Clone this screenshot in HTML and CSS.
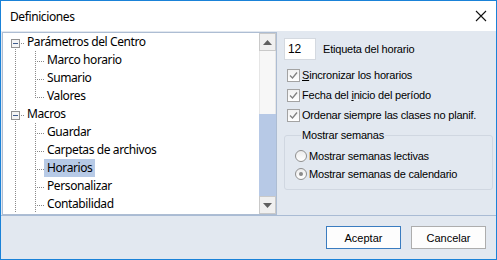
FILE: index.html
```html
<!DOCTYPE html>
<html lang="es">
  <head>
    <meta charset="UTF-8" />
    <title>Definiciones</title>
    <link rel="stylesheet" href="styles.css">
  </head>
  <body>
    <div class="window">
      <div class="titlebar">
        <span class="title">Definiciones</span>
        <svg class="close" width="12" height="12" viewBox="0 0 12 12">
          <path d="M1 1L11 11M11 1L1 11" />
        </svg>
      </div>

      <div class="main">
        <div class="tree">
          <div class="tree-list">
            <div class="row">
              <svg class="guide" width="19" height="18">
                <path class="dot" d="M10.5 16V18M16 10.5H19" />
                <rect class="box" x="6.5" y="6.5" width="8" height="8" />
                <path class="minus" d="M8 10.5h5" />
              </svg>
              <span class="label">Parámetros del Centro</span>
            </div>
            <div class="row">
              <svg class="guide" width="39" height="18">
                <path class="dot" d="M10.5 0V18M30.5 0V18M32 10.5H39" />
              </svg>
              <span class="label">Marco horario</span>
            </div>
            <div class="row">
              <svg class="guide" width="39" height="18">
                <path class="dot" d="M10.5 0V18M30.5 0V18M32 10.5H39" />
              </svg>
              <span class="label">Sumario</span>
            </div>
            <div class="row">
              <svg class="guide" width="39" height="18">
                <path class="dot" d="M10.5 0V18M30.5 0V11M32 10.5H39" />
              </svg>
              <span class="label">Valores</span>
            </div>
            <div class="row">
              <svg class="guide" width="19" height="18">
                <path class="dot" d="M10.5 0V6M10.5 16V18M16 10.5H19" />
                <rect class="box" x="6.5" y="6.5" width="8" height="8" />
                <path class="minus" d="M8 10.5h5" />
              </svg>
              <span class="label">Macros</span>
            </div>
            <div class="row">
              <svg class="guide" width="39" height="18">
                <path class="dot" d="M10.5 0V18M30.5 0V18M32 10.5H39" />
              </svg>
              <span class="label">Guardar</span>
            </div>
            <div class="row">
              <svg class="guide" width="39" height="18">
                <path class="dot" d="M10.5 0V18M30.5 0V18M32 10.5H39" />
              </svg>
              <span class="label">Carpetas de archivos</span>
            </div>
            <div class="row">
              <svg class="guide" width="39" height="18">
                <path class="dot" d="M10.5 0V18M30.5 0V18M32 10.5H39" />
              </svg>
              <span class="label selected">Horarios</span>
            </div>
            <div class="row">
              <svg class="guide" width="39" height="18">
                <path class="dot" d="M10.5 0V18M30.5 0V18M32 10.5H39" />
              </svg>
              <span class="label">Personalizar</span>
            </div>
            <div class="row">
              <svg class="guide" width="39" height="18">
                <path class="dot" d="M10.5 0V18M30.5 0V18M32 10.5H39" />
              </svg>
              <span class="label">Contabilidad</span>
            </div>
          </div>

          <div class="scrollbar">
            <div class="scroll-btn">
              <svg width="9" height="5" viewBox="0 0 9 5"><path d="M4.5 0L9 5H0Z" /></svg>
            </div>
            <div class="track">
              <div class="thumb"></div>
            </div>
            <div class="scroll-btn">
              <svg width="9" height="5" viewBox="0 0 9 5"><path d="M0 0H9L4.5 5Z" /></svg>
            </div>
          </div>
        </div>

        <div class="options">
          <div class="field-row">
            <div class="num-input">12</div>
            <span>Etiqueta del horario</span>
          </div>

          <div class="check-row">
            <span class="check">
              <svg width="11" height="11" viewBox="0 0 11 11"><path d="M2 5.5L4.5 8L9 2.5" /></svg>
            </span>
            <span><u>S</u>incronizar los horarios</span>
          </div>
          <div class="check-row">
            <span class="check">
              <svg width="11" height="11" viewBox="0 0 11 11"><path d="M2 5.5L4.5 8L9 2.5" /></svg>
            </span>
            <span>Fecha del <u>i</u>nicio del período</span>
          </div>
          <div class="check-row">
            <span class="check">
              <svg width="11" height="11" viewBox="0 0 11 11"><path d="M2 5.5L4.5 8L9 2.5" /></svg>
            </span>
            <span>Ordenar siempre las clases no planif.</span>
          </div>

          <fieldset class="group">
            <legend>Mostrar semanas</legend>
            <div class="radio-row">
              <span class="radio"></span>
              <span>Mostrar semanas lectivas</span>
            </div>
            <div class="radio-row">
              <span class="radio checked"></span>
              <span>Mostrar semanas de calendario</span>
            </div>
          </fieldset>
        </div>
      </div>

      <div class="buttons">
        <button class="btn default">Aceptar</button>
        <button class="btn">Cancelar</button>
      </div>
    </div>
  </body>
</html>
```

FILE: styles.css
```css
* {
  box-sizing: border-box;
}

body {
  margin: 0;
  padding: 0;
  background: #ffffff;
}

.window {
  width: 497px;
  height: 260px;
  border: 1px solid #1a82d8;
  background: #e2e8f0;
  display: flex;
  flex-direction: column;
}

.titlebar {
  height: 30px;
  background: #ffffff;
  display: flex;
  align-items: center;
  justify-content: space-between;
  padding: 0 9px 0 9px;
}

.title {
  font-family: "Noto Sans", sans-serif;
  font-size: 12px;
  letter-spacing: -0.4px;
  color: #000000;
}

.close path {
  stroke: #111111;
  stroke-width: 1.1;
  fill: none;
}

.main {
  height: 185px;
  display: flex;
  padding: 1px 0 0 1px;
  border-bottom: 1px solid #a9bbd4;
}

/* tree view */

.tree {
  width: 276px;
  height: 183px;
  border: 1px solid #adbdd3;
  background: #ffffff;
  display: flex;
}

.tree-list {
  flex: 1;
  padding-left: 2px;
  font-family: "Noto Sans", sans-serif;
  font-size: 12px;
  letter-spacing: -0.4px;
  color: #000000;
}

.row {
  height: 18px;
  display: flex;
  align-items: center;
}

.guide {
  flex: none;
  align-self: flex-start;
}

.dot {
  stroke: #8a8a8a;
  stroke-width: 1;
  stroke-dasharray: 1 1;
  fill: none;
  shape-rendering: crispEdges;
}

.box {
  fill: #f4f4f4;
  stroke: #919191;
  shape-rendering: crispEdges;
}

.minus {
  stroke: #3f5c8c;
  stroke-width: 1;
  shape-rendering: crispEdges;
}

.label {
  height: 18px;
  line-height: 17px;
  padding: 0 3px;
  white-space: nowrap;
}

.label.selected {
  background: #b7cae6;
}

.scrollbar {
  width: 17px;
  display: flex;
  flex-direction: column;
  background: #f7f7f7;
}

.scroll-btn {
  height: 18px;
  border: 1px solid #c9c9c9;
  background: #f0f0f0;
  display: flex;
  align-items: center;
  justify-content: center;
}

.scroll-btn path {
  fill: #606060;
}

.track {
  flex: 1;
  display: flex;
  flex-direction: column;
  justify-content: flex-end;
  border-left: 1px solid #e6e6e6;
  border-right: 1px solid #e6e6e6;
}

.thumb {
  height: 82px;
  margin: 0 -1px;
  background: #b7c9e6;
}

/* options panel */

.options {
  flex: 1;
  padding: 6px 3px 0 7px;
  font-family: "Liberation Sans", Arial, sans-serif;
  font-size: 11px;
  letter-spacing: -0.2px;
  color: #000000;
}

.field-row {
  display: flex;
  align-items: center;
  gap: 7px;
}

.num-input {
  width: 32px;
  height: 22px;
  background: #ffffff;
  border: 1px solid #d4d9e0;
  padding: 0 0 0 3px;
  line-height: 20px;
  font-size: 12px;
}

.field-row + .check-row {
  margin-top: 5px;
}

.check-row {
  height: 20px;
  display: flex;
  align-items: center;
  gap: 2px;
  padding-left: 3px;
}

.check {
  width: 13px;
  height: 13px;
  border: 1px solid #a3a3a3;
  background: linear-gradient(#f1f1f1, #ffffff);
  display: flex;
  align-items: center;
  justify-content: center;
}

.check path {
  stroke: #808080;
  stroke-width: 1.3;
  fill: none;
}

.group {
  margin: 4px 0 0 0;
  width: 209px;
  padding: 5px 0 6px 10px;
  border: 1px solid #d0d7e1;
  border-radius: 3px;
}

.group legend {
  margin-left: 6px;
  padding: 0 1px;
  line-height: 13px;
}

.radio-row {
  height: 18px;
  display: flex;
  align-items: center;
  gap: 2px;
}

.radio {
  width: 12px;
  height: 12px;
  border: 1px solid #8f8f8f;
  border-radius: 50%;
  background: linear-gradient(#ececec, #ffffff);
  display: flex;
  align-items: center;
  justify-content: center;
}

.radio.checked::after {
  content: "";
  width: 4px;
  height: 4px;
  border-radius: 50%;
  background: #8a8a8a;
}

/* bottom buttons */

.buttons {
  flex: 1;
  display: flex;
  justify-content: flex-end;
  gap: 10px;
  padding: 10px 10px 0 0;
}

.btn {
  width: 75px;
  height: 23px;
  border: 1px solid #adadad;
  background: #fdfdfd;
  font-family: "Liberation Sans", Arial, sans-serif;
  font-size: 11px;
  color: #000000;
  padding: 0;
}

.btn.default {
  border-color: #3a7cc0;
}
```
